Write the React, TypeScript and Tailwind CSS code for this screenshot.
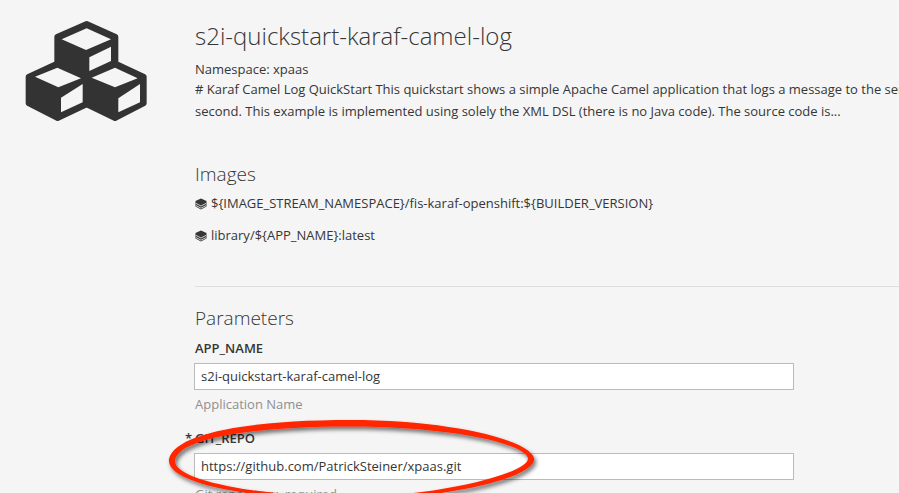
import React from "react";

const font = { fontFamily: '"Open Sans", sans-serif' };

const CubesIcon = () => (
  <svg width="200" height="140" viewBox="0 0 600 420" className="block">
    <path
      fill="#333333"
      stroke="#333333"
      strokeWidth="16"
      strokeLinejoin="round"
      d="M260 71L347 110V190L432 230V310L345 355L260 314L173 355L85 310V230L171 190V110Z"
    />
    <g fill="#f5f5f5">
      <path d="M185 118L260 85L333 118L258 150Z" />
      <path d="M268 172L333 140V183L268 213Z" />
      <path d="M105 230L172 203L243 235L175 262Z" />
      <path d="M183 293L248 252V307L183 337Z" />
      <path d="M275 233L345 203L413 235L345 262Z" />
      <path d="M355 295L420 252V307L355 337Z" />
    </g>
  </svg>
);

const LayersIcon = () => (
  <svg width="12" height="12" viewBox="0 0 12 12" className="shrink-0">
    <path fill="#363636" d="M6 .5L11.5 3V5.2L11.5 8.6L6 11.5L.5 8.6V3Z" />
    <path fill="none" stroke="#f5f5f5" strokeWidth=".8" d="M1 5.4L6 8L11 5.4M1 7.6L6 10.2L11 7.6" />
  </svg>
);

const ImageRow = ({ name }: { name: string }) => (
  <div className="flex items-center gap-[4px] h-[18px]">
    <LayersIcon />
    <span>{name}</span>
  </div>
);

const Field = ({ label, value, help, required }: { label: string; value: string; help: string; required?: boolean }) => (
  <div className="relative h-[75px]">
    {required && <span className="absolute left-[-10px] top-0 font-semibold leading-[18px]">*</span>}
    <div className="font-semibold leading-[18px] text-[#363636]">{label}</div>
    <div className="mt-[6px] -ml-px w-[600px] h-[27px] border border-[#bbbbbb] bg-white flex items-center px-[6px] text-[#363636]">
      {value}
    </div>
    <div className="mt-[5px] leading-[18px] text-[#8f8f8f] whitespace-nowrap">{help}</div>
  </div>
);

export default function App() {
  return (
    <div className="relative w-[899px] h-[493px] overflow-hidden bg-[#f5f5f5] text-[#363636] text-[13px]" style={font}>
      <div className="flex">
        <div className="w-[195px] shrink-0">
          <CubesIcon />
        </div>
        <div className="w-[704px] shrink-0 pt-[19px]">
          <h1 className="text-[24px] font-light leading-[33px] text-[#363636] whitespace-nowrap">s2i-quickstart-karaf-camel-log</h1>
          <p className="mt-[7px] leading-[20px]">Namespace: xpaas</p>
          <p className="w-[704px] leading-[22px] whitespace-nowrap overflow-hidden -mt-px">
            # Karaf Camel Log QuickStart This quickstart shows a simple Apache Camel application that logs a message to the server
            <br />
            second. This example is implemented using solely the XML DSL (there is no Java code). The source code is...
          </p>

          <h2 className="mt-[39px] text-[19px] font-light leading-[26px]">Images</h2>
          <div className="mt-[8px] flex flex-col gap-[14px]">
            <ImageRow name="${IMAGE_STREAM_NAMESPACE}/fis-karaf-openshift:${BUILDER_VERSION}" />
            <ImageRow name="library/${APP_NAME}:latest" />
          </div>

          <hr className="mt-[41px] border-t border-[#dedede]" />

          <h2 className="mt-[18px] text-[19px] font-light leading-[26px]">Parameters</h2>
          <div className="mt-[8px] flex flex-col gap-[15px]">
            <Field label="APP_NAME" value="s2i-quickstart-karaf-camel-log" help="Application Name" />
            <Field label="GIT_REPO" value="https://github.com/PatrickSteiner/xpaas.git" help="Git repository, required" required />
          </div>
        </div>
      </div>

      {/* hand drawn annotation */}
      <svg className="absolute left-0 top-0 pointer-events-none" width="899" height="493" viewBox="0 0 899 493">
        <defs>
          <filter id="sh" x="-10%" y="-30%" width="120%" height="160%">
            <feDropShadow dx="2" dy="3" stdDeviation="2" floodColor="#000" floodOpacity="0.55" />
          </filter>
        </defs>
        <path
          fillRule="evenodd"
          fill="#ff2600"
          filter="url(#sh)"
          d="M169 459C175 433 250 420 350 420C450 420 530 440 534 458C538 478 440 500 350 500C260 500 165 485 169 459Z
             M175 460C180 437 260 426.5 350 426.5C445 426.5 522 442 528 458C530 474 430 497 350 497C270 497 172 482 175 460Z"
        />
      </svg>
    </div>
  );
}
